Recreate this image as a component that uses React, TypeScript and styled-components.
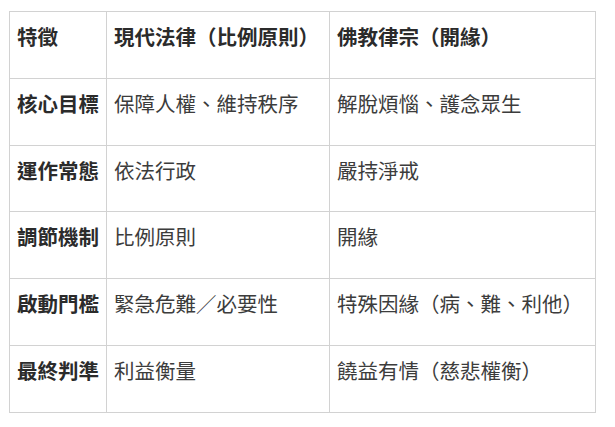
import React from 'react';
import styled, { createGlobalStyle } from 'styled-components';

const GlobalStyle = createGlobalStyle`
  html, body {
    margin: 0;
    padding: 0;
    background: #ffffff;
  }
  body {
    font-family: "Noto Sans CJK TC", "Noto Sans", sans-serif;
    color: #333333;
  }
`;

const Page = styled.div`
  padding: 11px 0 0 9px;
`;

const Table = styled.table`
  border-collapse: collapse;
  table-layout: fixed;
  width: 586px;
  font-size: 20.5px;
`;

const Col = styled.col<{ $w: number }>`
  width: ${(p) => p.$w}px;
`;

const Cell = styled.td<{ $bold?: boolean }>`
  border: 1px solid #d2d2d2;
  height: 66.8px;
  box-sizing: border-box;
  padding: 9px 7px 0 7px;
  vertical-align: top;
  text-align: left;
  line-height: 30px;
  font-weight: ${(p) => (p.$bold ? 700 : 400)};
  color: ${(p) => (p.$bold ? '#2b2b2b' : '#3c3c3c')};
  white-space: nowrap;
`;

const HeadCell = styled(Cell).attrs({ as: 'th' })``;

const rows: [string, string, string][] = [
  ['核心目標', '保障人權、維持秩序', '解脫煩惱、護念眾生'],
  ['運作常態', '依法行政', '嚴持淨戒'],
  ['調節機制', '比例原則', '開緣'],
  ['啟動門檻', '緊急危難／必要性', '特殊因緣（病、難、利他）'],
  ['最終判準', '利益衡量', '饒益有情（慈悲權衡）'],
];

export default function App() {
  return (
    <>
      <GlobalStyle />
      <Page>
        <Table>
          <colgroup>
            <Col $w={97} />
            <Col $w={223} />
            <Col $w={266} />
          </colgroup>
          <thead>
            <tr>
              <HeadCell $bold>特徵</HeadCell>
              <HeadCell $bold>現代法律（比例原則）</HeadCell>
              <HeadCell $bold>佛教律宗（開緣）</HeadCell>
            </tr>
          </thead>
          <tbody>
            {rows.map((r) => (
              <tr key={r[0]}>
                <Cell $bold>{r[0]}</Cell>
                <Cell>{r[1]}</Cell>
                <Cell>{r[2]}</Cell>
              </tr>
            ))}
          </tbody>
        </Table>
      </Page>
    </>
  );
}
